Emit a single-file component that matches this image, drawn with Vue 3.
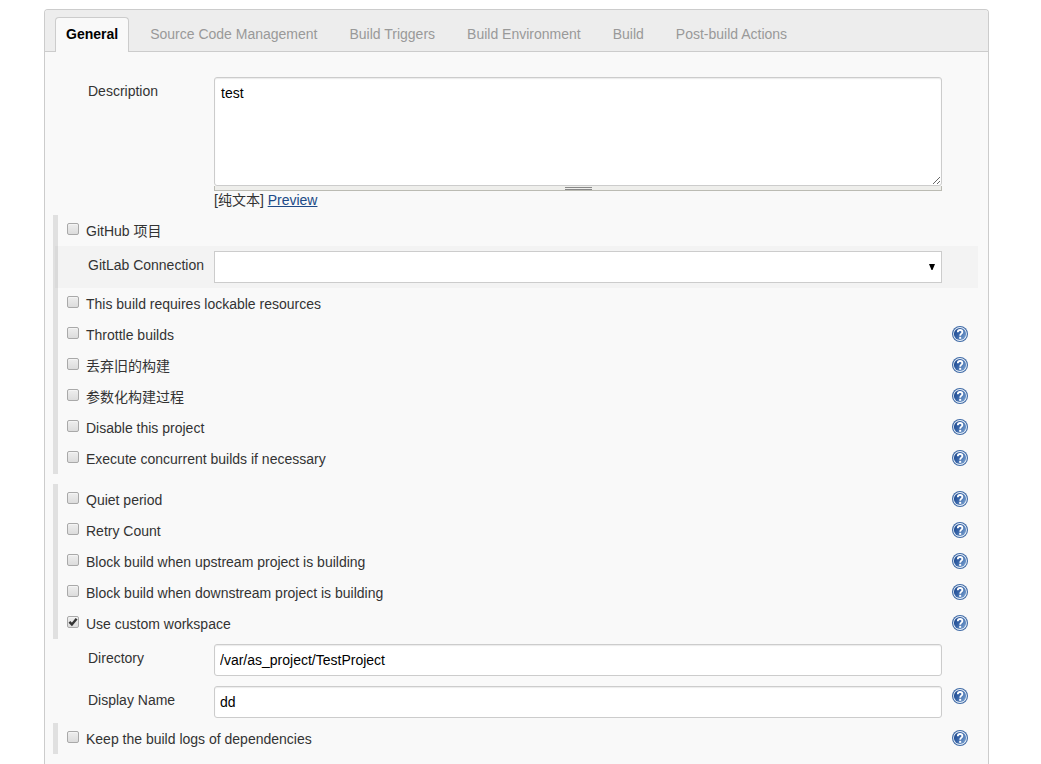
<script setup>
import { ref, reactive } from 'vue'

const tabs = ['General', 'Source Code Management', 'Build Triggers', 'Build Environment', 'Build', 'Post-build Actions']
const activeTab = ref('General')

const description = ref('test')
const connection = ref('')

const groups = reactive([
  {
    id: 'project',
    rows: [
      { id: 'github', label: 'GitHub 项目', checked: false, help: false },
      { id: 'gitlab', label: 'GitLab Connection', type: 'select' },
      { id: 'lockable', label: 'This build requires lockable resources', checked: false, help: false },
      { id: 'throttle', label: 'Throttle builds', checked: false, help: true },
      { id: 'discard', label: '丢弃旧的构建', checked: false, help: true },
      { id: 'params', label: '参数化构建过程', checked: false, help: true },
      { id: 'disable', label: 'Disable this project', checked: false, help: true },
      { id: 'concurrent', label: 'Execute concurrent builds if necessary', checked: false, help: true }
    ]
  },
  {
    id: 'advanced',
    spaced: true,
    rows: [
      { id: 'quiet', label: 'Quiet period', checked: false, help: true },
      { id: 'retry', label: 'Retry Count', checked: false, help: true },
      { id: 'upstream', label: 'Block build when upstream project is building', checked: false, help: true },
      { id: 'downstream', label: 'Block build when downstream project is building', checked: false, help: true },
      { id: 'workspace', label: 'Use custom workspace', checked: true, help: true }
    ]
  },
  {
    id: 'names',
    plain: true,
    rows: [
      { id: 'directory', label: 'Directory', type: 'text', value: '/var/as_project/TestProject', help: false },
      { id: 'display', label: 'Display Name', type: 'text', value: 'dd', help: true }
    ]
  },
  {
    id: 'logs',
    rows: [{ id: 'keep', label: 'Keep the build logs of dependencies', checked: false, help: true }]
  }
])
</script>

<template>
  <svg class="defs" aria-hidden="true">
    <defs>
      <linearGradient id="help-fill" x1="0" y1="0.2" x2="1" y2="0.8">
        <stop offset="0" stop-color="#1f4a90" />
        <stop offset="0.4" stop-color="#3562a6" />
        <stop offset="1" stop-color="#7ba2d0" />
      </linearGradient>
      <symbol id="help-icon" viewBox="0 0 16 16">
        <circle cx="8" cy="8" r="8" fill="#3f6aa6" />
        <circle cx="8" cy="8" r="6.9" fill="#eef4fa" />
        <circle cx="8" cy="8" r="6.1" fill="url(#help-fill)" />
        <path d="M5.8 6.2C5.8 4.8 6.7 4 8.1 4s2.3.8 2.3 2c0 1.7-2.2 1.7-2.2 3.7" fill="none" stroke="#fff" stroke-width="1.8" />
        <rect x="7.2" y="10.8" width="2" height="2" fill="#fff" />
      </symbol>
    </defs>
  </svg>

  <form class="panel" @submit.prevent>
    <div class="tabs" role="tablist">
      <button
        v-for="tab in tabs"
        :key="tab"
        type="button"
        role="tab"
        class="tab"
        :class="{ active: tab === activeTab }"
        :aria-selected="tab === activeTab"
        @click="activeTab = tab"
      >{{ tab }}</button>
    </div>

    <div class="body">
      <div class="group plain">
        <div class="field-row">
          <label class="name" for="description">Description</label>
          <div class="control">
            <textarea id="description" v-model="description" class="box area" spellcheck="false"></textarea>
            <div class="grip"><span></span></div>
            <div class="format">[纯文本] <a href="#preview">Preview</a></div>
          </div>
        </div>
      </div>

      <div
        v-for="group in groups"
        :key="group.id"
        class="group"
        :class="{ plain: group.plain, spaced: group.spaced }"
      >
        <template v-for="row in group.rows" :key="row.id">
          <div v-if="row.type" class="field-row" :class="{ shaded: row.type === 'select' }">
            <label class="name" :for="row.id">{{ row.label }}</label>
            <div v-if="row.type === 'select'" class="control picker">
              <select :id="row.id" v-model="connection" class="box"><option value=""></option></select>
              <svg class="arrow" viewBox="0 0 6 6" aria-hidden="true"><path d="M0 0h6L3.5 6h-1z" /></svg>
            </div>
            <div v-else class="control">
              <input :id="row.id" v-model="row.value" class="box" type="text" spellcheck="false" />
            </div>
            <button v-if="row.help" type="button" class="help" :aria-label="'Help: ' + row.label">
              <svg><use href="#help-icon" /></svg>
            </button>
          </div>
          <div v-else class="check-row">
            <input :id="row.id" v-model="row.checked" type="checkbox" class="tick" />
            <svg v-if="row.checked" class="mark" viewBox="0 0 12 12" aria-hidden="true">
              <path d="M2.4 5.8l2.5 2.6L9.6 2.8" />
            </svg>
            <label class="caption" :for="row.id">{{ row.label }}</label>
            <button v-if="row.help" type="button" class="help" :aria-label="'Help: ' + row.label">
              <svg><use href="#help-icon" /></svg>
            </button>
          </div>
        </template>
      </div>
    </div>
  </form>
</template>

<style>
body {
  background: #fff;
}
</style>

<style scoped>
.defs {
  position: absolute;
  width: 0;
  height: 0;
}

.panel,
.panel button,
.panel input,
.panel select,
.panel textarea {
  font-family: "Liberation Sans", Arial, "Noto Sans CJK SC", sans-serif;
  font-size: 14px;
  line-height: 20px;
  box-sizing: border-box;
}

.panel {
  margin: 9px 52px 0 44px;
  border: 1px solid #ccc;
  border-bottom: 0;
  border-radius: 4px 4px 0 0;
  background: #f9f9f9;
  color: #333;
  min-height: calc(100vh - 9px);
}

.tabs {
  display: flex;
  gap: 10px;
  padding: 7px 10px 0;
  background: #ededed;
  border-bottom: 1px solid #ccc;
  border-radius: 3px 3px 0 0;
}

.panel .tab {
  height: 35px;
  margin: 0 0 -1px;
  padding: 0 10px 2px;
  border: 1px solid transparent;
  border-bottom: 0;
  border-radius: 4px 4px 0 0;
  background: none;
  color: #999;
  white-space: nowrap;
  cursor: pointer;
}

.panel .tab.active {
  border-color: #ccc;
  background: #f9f9f9;
  color: #000;
  font-weight: bold;
}

.body {
  padding: 20px 10px 10px 8px;
}

.group {
  border-left: 5px solid #e0e0e0;
}

.group.plain {
  border-left-color: transparent;
}

.group.spaced {
  margin-top: 10px;
}

.field-row {
  display: grid;
  grid-template-columns: 126px minmax(0, 1fr) 36px;
  align-items: start;
  padding: 0 0 0 30px;
}

.field-row.shaded {
  margin-left: -3px;
  padding-left: 33px;
  background: rgba(0, 0, 0, 0.025);
}

.name {
  padding-top: 9px;
}

.control {
  padding: 5px 0;
}

.box {
  display: block;
  width: 100%;
  height: 32px;
  margin: 0;
  padding: 5px;
  border: 1px solid #ccc;
  border-radius: 3px;
  background: #fff;
  color: #000;
  box-shadow: inset 0 1px 1px rgba(0, 0, 0, 0.08);
}

.area {
  height: 109px;
  padding: 5px 6px;
  resize: vertical;
}

.grip {
  display: flex;
  justify-content: center;
  border: 1px solid #bbbbb3;
  border-top: 0;
  background: #eeeeeb;
}

.grip span {
  width: 27px;
  height: 1px;
  margin-top: 1px;
  border-top: 1px solid #888;
  border-bottom: 1px solid #888;
}

.format {
  height: 19px;
  line-height: 19px;
}

.format a {
  color: #204a87;
}

.picker {
  position: relative;
}

select.box {
  appearance: none;
  border-radius: 0;
  box-shadow: none;
}

.arrow {
  position: absolute;
  top: 18px;
  right: 7px;
  width: 6px;
  height: 6px;
  pointer-events: none;
}

.check-row {
  position: relative;
  display: flex;
  align-items: flex-start;
  height: 31px;
  padding: 0 10px 0 9px;
}

.tick {
  appearance: none;
  flex: none;
  width: 12px;
  height: 12px;
  margin: 8px 7px 0 0;
  border: 1px solid #a9a9a9;
  border-radius: 2px;
  background: linear-gradient(#eee, #dcdcdc);
  box-shadow: inset 0 1px 0 #f4f4f4;
}

.mark {
  position: absolute;
  top: 8px;
  left: 9px;
  width: 12px;
  height: 12px;
  pointer-events: none;
}

.mark path {
  fill: none;
  stroke: #333;
  stroke-width: 2.4;
}

.caption {
  margin: 6px auto 0 0;
}

.help {
  flex: none;
  width: 16px;
  height: 16px;
  margin: 7px 0 0;
  padding: 0;
  border: 0;
  background: none;
  cursor: pointer;
}

.field-row .help {
  margin-left: 10px;
}

.help svg {
  display: block;
  width: 16px;
  height: 16px;
}
</style>
